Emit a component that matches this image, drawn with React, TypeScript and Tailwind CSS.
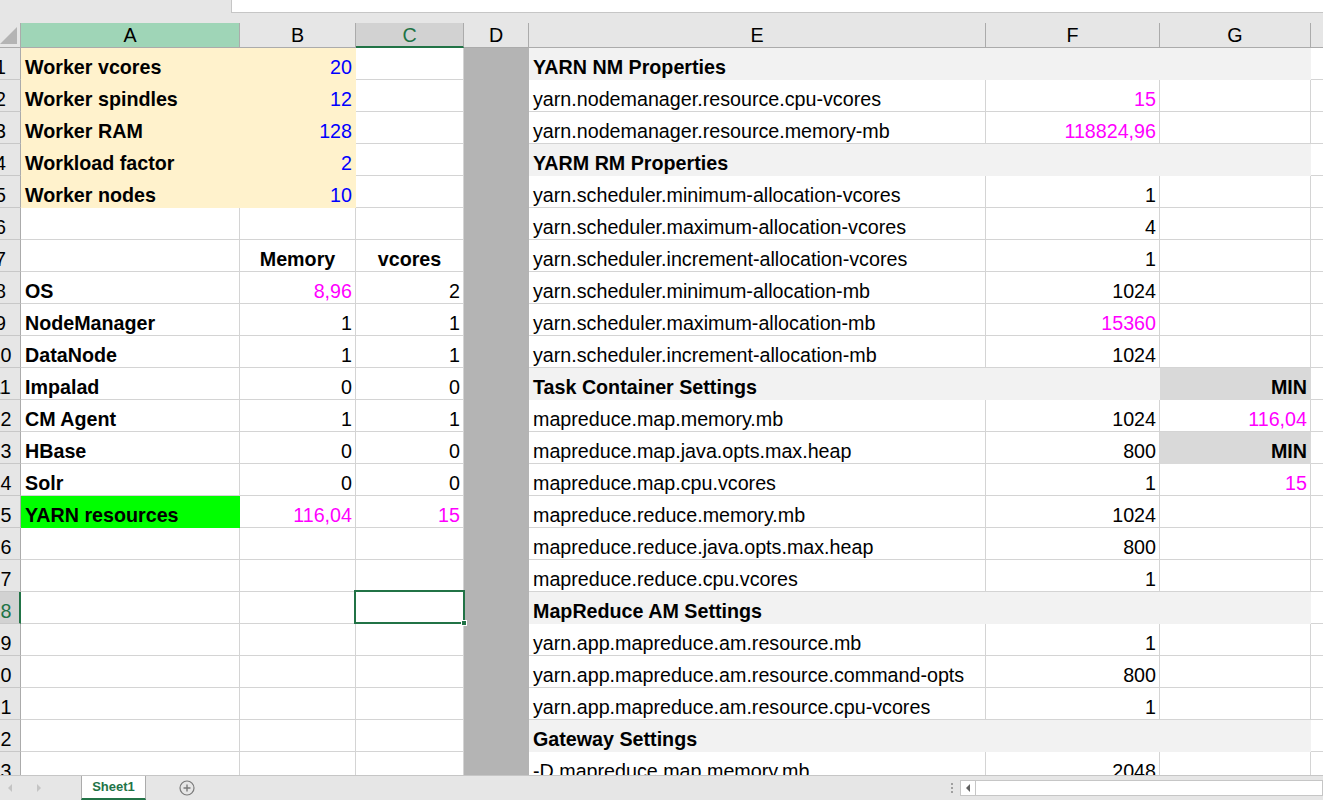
import React from 'react';

type Fill = 'cream' | 'lime' | 'band' | 'min';
type Cell = {
  t?: string;
  bold?: boolean;
  tone?: 'blue' | 'pink';
  align?: 'left' | 'right' | 'center';
  fill?: Fill;
};
type Row = { a?: Cell; b?: Cell; c?: Cell; e?: Cell; f?: Cell; g?: Cell };

const fillCls: Record<Fill, string> = {
  cream: 'bg-[#fff2cc] border-[#fff2cc]',
  lime: 'bg-[#00ff00] border-[#00ff00]',
  band: 'bg-[#f2f2f2] border-[#f2f2f2]',
  min: 'bg-[#d9d9d9] border-[#d9d9d9]',
};

// little helpers to keep the sheet data readable
const lbl = (t: string, fill?: Fill): Cell => ({ t, bold: true, fill });
const num = (t: string, tone?: 'blue' | 'pink', fill?: Fill): Cell => ({ t, tone, align: 'right', fill });
const prop = (t: string): Cell => ({ t });
const band = (t?: string): Row => ({ e: { t, bold: true, fill: 'band' }, f: { fill: 'band' }, g: { fill: 'band' } });

const rows: Row[] = [
  { a: lbl('Worker vcores', 'cream'), b: num('20', 'blue', 'cream'), ...band('YARN NM Properties') },
  { a: lbl('Worker spindles', 'cream'), b: num('12', 'blue', 'cream'), e: prop('yarn.nodemanager.resource.cpu-vcores'), f: num('15', 'pink') },
  { a: lbl('Worker RAM', 'cream'), b: num('128', 'blue', 'cream'), e: prop('yarn.nodemanager.resource.memory-mb'), f: num('118824,96', 'pink') },
  { a: lbl('Workload factor', 'cream'), b: num('2', 'blue', 'cream'), ...band('YARM RM Properties') },
  { a: lbl('Worker nodes', 'cream'), b: num('10', 'blue', 'cream'), e: prop('yarn.scheduler.minimum-allocation-vcores'), f: num('1') },
  { e: prop('yarn.scheduler.maximum-allocation-vcores'), f: num('4') },
  {
    b: { t: 'Memory', bold: true, align: 'center' },
    c: { t: 'vcores', bold: true, align: 'center' },
    e: prop('yarn.scheduler.increment-allocation-vcores'),
    f: num('1'),
  },
  { a: lbl('OS'), b: num('8,96', 'pink'), c: num('2'), e: prop('yarn.scheduler.minimum-allocation-mb'), f: num('1024') },
  { a: lbl('NodeManager'), b: num('1'), c: num('1'), e: prop('yarn.scheduler.maximum-allocation-mb'), f: num('15360', 'pink') },
  { a: lbl('DataNode'), b: num('1'), c: num('1'), e: prop('yarn.scheduler.increment-allocation-mb'), f: num('1024') },
  {
    a: lbl('Impalad'),
    b: num('0'),
    c: num('0'),
    e: { t: 'Task Container Settings', bold: true, fill: 'band' },
    f: { fill: 'band' },
    g: { t: 'MIN', bold: true, align: 'right', fill: 'min' },
  },
  { a: lbl('CM Agent'), b: num('1'), c: num('1'), e: prop('mapreduce.map.memory.mb'), f: num('1024'), g: num('116,04', 'pink') },
  { a: lbl('HBase'), b: num('0'), c: num('0'), e: prop('mapreduce.map.java.opts.max.heap'), f: num('800'), g: { t: 'MIN', bold: true, align: 'right', fill: 'min' } },
  { a: lbl('Solr'), b: num('0'), c: num('0'), e: prop('mapreduce.map.cpu.vcores'), f: num('1'), g: num('15', 'pink') },
  { a: lbl('YARN resources', 'lime'), b: num('116,04', 'pink'), c: num('15', 'pink'), e: prop('mapreduce.reduce.memory.mb'), f: num('1024') },
  { e: prop('mapreduce.reduce.java.opts.max.heap'), f: num('800') },
  { e: prop('mapreduce.reduce.cpu.vcores'), f: num('1') },
  band('MapReduce AM Settings'),
  { e: prop('yarn.app.mapreduce.am.resource.mb'), f: num('1') },
  { e: prop('yarn.app.mapreduce.am.resource.command-opts'), f: num('800') },
  { e: prop('yarn.app.mapreduce.am.resource.cpu-vcores'), f: num('1') },
  band('Gateway Settings'),
  { e: prop('-D mapreduce.map.memory.mb'), f: num('2048') },
];

const SELECTED_ROW = 18;

function GridCell({ w, cell, selected }: { w: string; cell?: Cell; selected?: boolean }) {
  const fill = cell?.fill ? fillCls[cell.fill] : 'bg-white border-[#d4d4d4]';
  const align =
    cell?.align === 'right' ? 'justify-end pr-[3px]' : cell?.align === 'center' ? 'justify-center' : 'justify-start pl-[4px]';
  const tone = cell?.tone === 'blue' ? 'text-[#0000ff]' : cell?.tone === 'pink' ? 'text-[#ff00ff]' : 'text-black';
  return (
    <div
      className={`${w} relative shrink-0 h-[32px] border-r border-b flex items-start pt-[8px] leading-[22px] whitespace-nowrap ${fill} ${align} ${tone} ${cell?.bold ? 'font-bold' : ''}`}
    >
      {cell?.t}
      {selected && (
        <div className="absolute left-[-2px] top-[-2px] w-[111px] h-[34px] border-2 border-[#217346] z-10">
          <div className="absolute right-[-4px] bottom-[-4px] w-[6px] h-[6px] bg-[#217346] border border-white" />
        </div>
      )}
    </div>
  );
}

function ColHead({ w, label, kind }: { w: string; label?: string; kind?: 'active' | 'sel' }) {
  const look =
    kind === 'active'
      ? 'bg-[#9fd5b7] border-b border-[#ababab] text-black'
      : kind === 'sel'
        ? 'bg-[#d2d2d2] border-b-2 border-b-[#217346] text-[#217346]'
        : 'border-b border-[#ababab] text-black';
  return (
    <div className={`${w} shrink-0 h-[25px] border-r border-r-[#ababab] flex justify-center pt-[1px] leading-[22px] ${look}`}>
      {label}
    </div>
  );
}

export default function App() {
  return (
    <div className="w-[1323px] h-[800px] overflow-hidden flex flex-col bg-[#e6e6e6] font-['Liberation_Sans',Arial,sans-serif] text-[19.7px]">
      {/* formula bar strip */}
      <div className="h-[23px] shrink-0 flex items-start">
        <div className="w-[231px] shrink-0" />
        <div className="flex-1 h-[13px] bg-white border-l border-b border-[#c6c6c6]" />
      </div>

      {/* column headers */}
      <div className="flex shrink-0">
        <div className="w-[21px] shrink-0 h-[25px] border-r border-b border-[#ababab] relative">
          <svg width="20" height="24" className="absolute left-0 top-0">
            <polygon points="17,4 17,21 0,21" fill="#b4b4b4" />
          </svg>
        </div>
        <ColHead w="w-[219px]" label="A" kind="active" />
        <ColHead w="w-[116px]" label="B" />
        <ColHead w="w-[108px]" label="C" kind="sel" />
        <ColHead w="w-[65px]" label="D" />
        <ColHead w="w-[457px]" label="E" />
        <ColHead w="w-[174px]" label="F" />
        <ColHead w="w-[151px]" label="G" />
        <div className="flex-1 h-[25px] border-b border-[#ababab]" />
      </div>

      {/* sheet body */}
      <div className="flex-1 overflow-hidden bg-white">
        {rows.map((r, i) => {
          const n = i + 1;
          const sel = n === SELECTED_ROW;
          return (
            <div key={n} className="flex">
              <div
                className={`w-[21px] shrink-0 h-[32px] overflow-hidden border-b border-[#c8c8c8] ${
                  sel ? 'bg-[#d2d2d2] text-[#217346] border-r-2 border-r-[#217346]' : 'bg-[#e6e6e6] text-black border-r border-r-[#ababab]'
                }`}
              >
                <div className="w-[43px] ml-[-21px] text-center pt-[8px] leading-[22px]">{n}</div>
              </div>
              <GridCell w="w-[219px]" cell={r.a} />
              <GridCell w="w-[116px]" cell={r.b} />
              <GridCell w="w-[108px]" cell={r.c} selected={sel} />
              <div className="w-[65px] shrink-0 h-[32px] bg-[#b4b4b4]" />
              <GridCell w="w-[457px]" cell={r.e} />
              <GridCell w="w-[174px]" cell={r.f} />
              <GridCell w="w-[151px]" cell={r.g} />
              <div className="flex-1 h-[32px] border-b border-[#d4d4d4] bg-white" />
            </div>
          );
        })}
      </div>

      {/* sheet tabs + horizontal scroll */}
      <div className="h-[25px] shrink-0 border-t border-[#c6c6c6] flex items-stretch text-[13px]">
        <div className="w-[81px] shrink-0 flex items-center">
          <svg width="81" height="24">
            <polygon points="12,8 12,16 8,12" fill="#c4c4c4" />
            <polygon points="37,8 37,16 41,12" fill="#c4c4c4" />
          </svg>
        </div>
        <div className="w-[65px] shrink-0 bg-white border-l border-r border-[#ababab] border-b-2 border-b-[#217346] flex items-center justify-center font-bold text-[#217346]">
          Sheet1
        </div>
        <div className="w-[80px] shrink-0 flex items-center">
          <svg width="80" height="24">
            <circle cx="41" cy="12" r="7" fill="none" stroke="#7a7a7a" strokeWidth="1.2" />
            <path d="M41 8.5v7M37.5 12h7" stroke="#7a7a7a" strokeWidth="1.4" />
          </svg>
        </div>
        <div className="flex-1" />
        <div className="w-[16px] shrink-0 flex flex-col items-center justify-center gap-[2px]">
          <div className="w-[2px] h-[2px] bg-[#a0a0a0]" />
          <div className="w-[2px] h-[2px] bg-[#a0a0a0]" />
          <div className="w-[2px] h-[2px] bg-[#a0a0a0]" />
        </div>
        <div className="w-[363px] shrink-0 flex items-center">
          <div className="w-full h-[16px] bg-white border border-[#c6c6c6] flex">
            <div className="w-[15px] h-full border-r border-[#c6c6c6] flex items-center justify-center">
              <svg width="6" height="8">
                <polygon points="5,0 5,8 1,4" fill="#606060" />
              </svg>
            </div>
          </div>
        </div>
      </div>
    </div>
  );
}
